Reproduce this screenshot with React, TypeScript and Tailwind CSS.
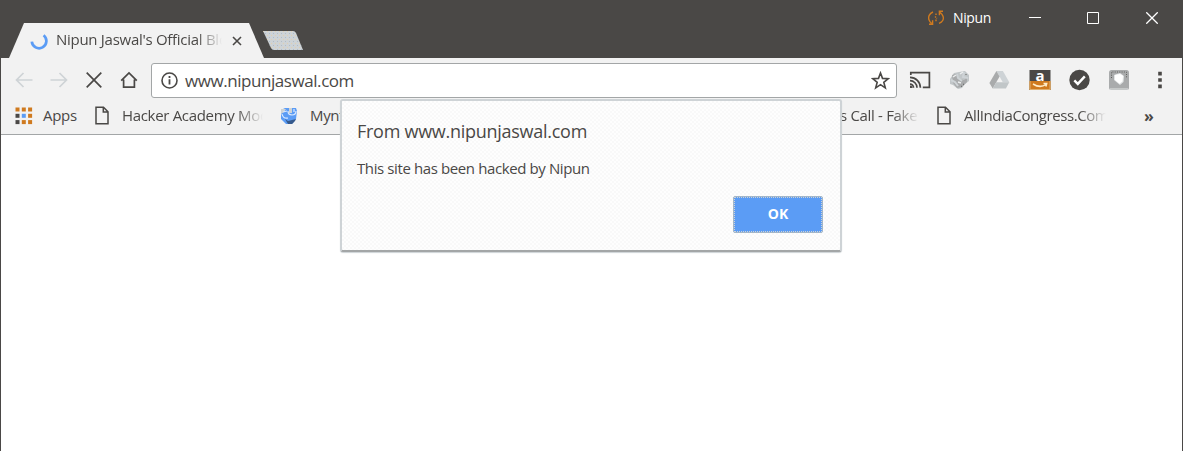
import type { ReactNode } from "react";

const fade =
  "overflow-hidden whitespace-nowrap [mask-image:linear-gradient(to_right,#000_calc(100%-26px),transparent)]";

function TitleBar() {
  return (
    <header className="flex h-[58px] items-start bg-[#4a4846]">
      <div className="mt-[23px] ml-[8px] flex h-[35px] w-[255px] items-center bg-[#f2f2f2] pl-[21px] [clip-path:polygon(0_100%,15px_0,240px_0,100%_100%)]">
        <svg width="18" height="18" viewBox="0 0 18 18" fill="none" className="shrink-0">
          <path d="M1.8 9.6A7.3 7.3 0 1 0 13.6 3.2" stroke="#5b9cf5" strokeWidth="2.7" />
        </svg>
        <span className={`ml-[8px] w-[166px] pb-[2px] text-[15px] tracking-[-0.28px] ${fade}`}>Nipun Jaswal&#39;s Official Blo</span>
        <svg width="10" height="10" viewBox="0 0 10 10" className="ml-[10px] shrink-0">
          <path d="M1 1l8 8M9 1l-8 8" stroke="#4a4846" strokeWidth="1.6" />
        </svg>
      </div>
      <svg width="40" height="19" viewBox="0 0 40 19" className="mt-[31px] -ml-px">
        <defs>
          <pattern id="dots" width="4" height="4" patternUnits="userSpaceOnUse">
            <path d="M0 0h1v1h-1z" fill="#e2cfb0" />
            <path d="M2 2h1v1h-1z" fill="#b0bcc8" />
          </pattern>
        </defs>
        <path d="M0 0h30q2 0 3 2l7 17H11q-2 0-3-2z" fill="#ced3d6" />
        <path d="M0 0h30q2 0 3 2l7 17H11q-2 0-3-2z" fill="url(#dots)" />
      </svg>
      <div className="ml-auto flex h-[36px] items-center text-white">
        <svg width="16" height="16" viewBox="0 0 16 16" fill="none" stroke="#cf7a1f" strokeWidth="1.4">
          <path d="M5 2C1.2 3.5 0 7 1 9.8 1.6 11.6 2.4 12.6 3.6 13.5M1 14.3h3.6v-4M11 13.3C14.5 12 16 9 15 6.2 14.4 4.4 13.3 3.2 12 2.3M15 1.2h-3.6v4" />
          <path d="M8 3.6v2M7 6.5l2 2M8 9.5V12" strokeDasharray="1.5 .8" />
        </svg>
        <span className="ml-[9px] w-[76px] pb-px text-[14px] font-medium tracking-[-0.4px]">Nipun</span>
        <svg width="12" height="12" viewBox="0 0 12 12">
          <path d="M0 5.5h12" stroke="white" />
        </svg>
        <svg width="12" height="12" viewBox="0 0 12 12" fill="none" className="ml-[46px]">
          <path d="M.5.5h11v11H.5z" stroke="white" />
        </svg>
        <svg width="12" height="12" viewBox="0 0 12 12" className="mr-[24px] ml-[47px]">
          <path d="M.3.3l11.4 11.4M11.7.3L.3 11.7" stroke="white" strokeWidth="1.3" />
        </svg>
      </div>
    </header>
  );
}

function NavIcon({ children, color = "#4a4846" }: { children: ReactNode; color?: string }) {
  return (
    <svg width="18" height="18" viewBox="0 0 18 18" fill="none" stroke={color} strokeWidth="1.7" className="shrink-0">
      {children}
    </svg>
  );
}

function ExtIcon({ children }: { children: ReactNode }) {
  return (
    <svg width="22" height="22" viewBox="0 0 22 22" className="shrink-0">
      {children}
    </svg>
  );
}

function Toolbar() {
  return (
    <div className="flex h-[45px] items-center pl-[14px]">
      <div className="-mt-[2px] flex gap-[17px]">
        <NavIcon color="#ced3d6">
          <path d="M17.5 9H1.8M8.5 2L1.5 9l7 7" />
        </NavIcon>
        <NavIcon color="#ced3d6">
          <path d="M.5 9h15.7M9.5 2l7 7-7 7" />
        </NavIcon>
        <NavIcon>
          <path d="M1.7 1.7l14.6 14.6M16.3 1.7L1.7 16.3" />
        </NavIcon>
        <NavIcon>
          <path d="M1.2 9.6L9 2l7.8 7.6M3.6 8.5v7.7h10.8V8.5" />
        </NavIcon>
      </div>
      <div className="ml-[13px] flex h-[35px] w-[746px] items-center rounded-[3px] border border-[#a3a6a7] bg-white pr-[6px] pl-[9px]">
        <svg width="17" height="17" viewBox="0 0 17 17" fill="none" stroke="#4a4846" className="shrink-0">
          <circle cx="8.5" cy="8.5" r="7.5" strokeWidth="1.6" />
          <path d="M8.5 4v2M8.5 7.3v5.3" strokeWidth="1.8" />
        </svg>
        <span className="ml-[7px] text-[17px] tracking-[-0.44px]">www.nipunjaswal.com</span>
        <svg width="19" height="19" viewBox="0 0 19 19" fill="none" stroke="#4a4846" strokeWidth="1.6" className="ml-auto">
          <path d="M9.5 2l2 5.4 5.8.3-4.5 3.6 1.5 5.6-4.8-3.2-4.8 3.2 1.5-5.6-4.5-3.6 5.8-.3z" />
        </svg>
      </div>
      <div className="-mt-px ml-[12px] flex gap-[18px]">
        <ExtIcon>
          <g fill="none" stroke="#4a4846" strokeWidth="1.7">
            <path d="M1.8 6V3.6h18.6v14.8h-6.6M1 15.2a3.5 3.5 0 0 1 3.5 3.5M1 11.7a7 7 0 0 1 7 7M1 8.3a10.4 10.4 0 0 1 10.4 10.4" />
          </g>
          <path d="M1 16.5a2.5 2.5 0 0 1 2.5 2.5H1z" fill="#4a4846" />
        </ExtIcon>
        <ExtIcon>
          <path d="M1 10l4-6 5-1 6-1 4 4v6l-4 3-3 4-4 1-5-4-3-1z" fill="#c1c6c8" />
          <path d="M3 6l4-1 3 5 5 1 3-3v5l-5 5-5 1-4-5z" fill="#a9abac" />
          <path d="M2 11l4 2 3 4M8 5l1 4 4 3M15 3l-1 5 5 1" fill="none" stroke="#ced3d6" strokeWidth="2" />
          <path d="M4 8l3-2M11 5l3-2M9 13l3 1" stroke="#eceeef" strokeWidth="1.5" />
          <path d="M12 17l1 .5M14 15l1 .5M17 5v1" stroke="#62625f" />
        </ExtIcon>
        <ExtIcon>
          <path d="M7.4 2h6.5l6.4 11.2h-6.5z" fill="#ced3d6" />
          <path d="M7.4 2l3.2 5.6-6.9 12L.4 14z" fill="#a9abac" />
          <path d="M7.2 13.2h13.1l-3.4 6.2H3.7z" fill="#c1c6c8" />
        </ExtIcon>
        <ExtIcon>
          <path d="M.5 1h21v20H.5z" fill="#4a4846" />
          <path d="M.5 12h21v9H.5z" fill="#cf7a1f" />
          <path d="M1 12v8.5h20V12" fill="none" stroke="#e0b070" />
          <text x="11" y="12.4" textAnchor="middle" fontSize="15" fontWeight="700" fill="white">a</text>
          <path d="M4 15q7 4.5 13 .5M14.5 14.5h3.2l-.8 3" fill="none" stroke="#ffecc8" strokeWidth="1.5" />
        </ExtIcon>
        <ExtIcon>
          <circle cx="10.5" cy="11" r="10.2" fill="#4a4846" />
          <path d="M5.3 11.4l3.5 3.5 7-7.5" fill="none" stroke="white" strokeWidth="2.4" />
        </ExtIcon>
        <ExtIcon>
          <rect x="0" y="1" width="20" height="20" rx="2.5" fill="#a9abac" />
          <path d="M2.5 9V3h15v6" fill="none" stroke="#62625f" strokeDasharray="1 1.3" />
          <path d="M5 6l6-2 4 3-.5 6-3.5 3-6-5z" fill="#e1e4e5" />
          <path d="M6 6l5-1 3 1.7-.5 5.5-3 2.5L6 11z" fill="white" />
          <path d="M1.5 20h17" stroke="#e1e4e5" strokeWidth="2" strokeDasharray="1 1" />
        </ExtIcon>
      </div>
      <svg width="4" height="18" viewBox="0 0 4 18" fill="#4a4846" className="-mt-px ml-[27px]">
        <path d="M.2.8h3.6v3.6H.2zM.2 7.2h3.6v3.6H.2zM.2 13.6h3.6v3.6H.2z" />
      </svg>
    </div>
  );
}

function FileIcon() {
  return (
    <svg width="14" height="19" viewBox="0 0 14 19" fill="none" stroke="#4a4846" strokeWidth="1.5" className="shrink-0">
      <path d="M1 1.2h7.5L13 5.8v12H1zM8.3 1.2V6H13" />
    </svg>
  );
}

const appColors = ["#cf7a1f", "#cf7a1f", "#cf7a1f", "#4a4846", "#5b9cf5", "#cf7a1f", "#4a4846", "#cf7a1f", "#cf7a1f"];

function Bookmarks() {
  return (
    <div className="flex h-[32px] items-center pb-[7px] pl-[14px] text-[15px] tracking-[-0.32px]">
      <svg width="18" height="18" viewBox="0 0 18 18" className="shrink-0">
        {appColors.map((c, i) => (
          <rect key={i} x={0.5 + (i % 3) * 6.3} y={0.5 + Math.floor(i / 3) * 6.3} width="4" height="4" fill={c} />
        ))}
      </svg>
      <span className="ml-[10px] w-[52px]">Apps</span>
      <FileIcon />
      <span className={`ml-[13px] w-[141px] ${fade}`}>Hacker Academy Mod</span>
      <svg width="18" height="18" viewBox="0 0 18 18" className="ml-[17px] shrink-0">
        <path d="M1 3l4-2h11l1 3-1 8-4 5H6l-5-5z" fill="#5b9cf5" />
        <path d="M1 2h5l-2 3-3 2zM9 1h3v5H9z" fill="#ced3d6" />
        <path d="M5 12l3 2 8-2-1 2-3 3H8z" fill="#365a8c" />
        <path d="M2 7q1 5 6 4M8 4q0 4 4 4t4-4M3 5l4-1M14 2v3" fill="none" stroke="#dceaff" strokeWidth="1.2" />
      </svg>
      <span className="ml-[12px] w-[530px]">Mynt</span>
      <span className={`w-[79px] ${fade}`}>s Call - Fake</span>
      <span className="ml-[18px] flex">
        <FileIcon />
      </span>
      <span className={`ml-[13px] w-[142px] tracking-[-0.42px] ${fade}`}>AllIndiaCongress.Com</span>
      <span className="ml-[38px] text-[16px] font-bold">»</span>
    </div>
  );
}

function AlertDialog() {
  return (
    <section
      role="alertdialog"
      className="absolute top-[99px] left-[339px] flex h-[153px] w-[502px] flex-col rounded-[3px] border-2 border-[#ced3d6] border-b-[#a3a6a7] bg-[#fcfcfc] bg-[repeating-conic-gradient(#f9f9f9_0_25%,#fefefe_0_50%)] bg-[length:4px_4px] pl-[15px] shadow-[0_1px_1px_#ced3d6]"
    >
      <h1 className="mt-[17px] text-[18px] leading-[26px] tracking-[-0.27px]">From www.nipunjaswal.com</h1>
      <p className="mt-[13px] text-[15px] leading-[22px] tracking-[-0.39px]">This site has been hacked by Nipun</p>
      <button className="mt-[17px] mr-[17px] flex h-[37px] w-[90px] items-center justify-center self-end rounded-[2px] border border-[#a3b6c8] bg-[#5b9cf5] text-white">
        <span className="flex h-full w-full items-center justify-center border border-dotted border-[#ced3d6] pb-[2px] text-[14px] font-bold">
          OK
        </span>
      </button>
    </section>
  );
}

export default function App() {
  return (
    <main className="relative h-[451px] w-[1183px] overflow-hidden border-x border-[#4a4846] bg-white font-['Open_Sans','Noto_Sans',sans-serif] text-[#4a4846]">
      <TitleBar />
      <div className="h-[77px] border-b border-[#a3a6a7] bg-[#f2f2f2]">
        <Toolbar />
        <Bookmarks />
      </div>
      <AlertDialog />
    </main>
  );
}
